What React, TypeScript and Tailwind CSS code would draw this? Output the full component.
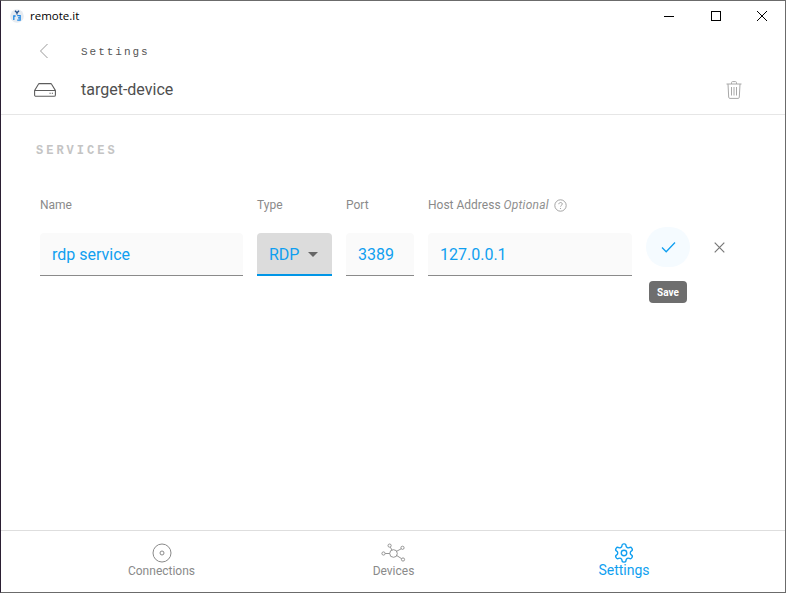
import React from "react";

function Field({ w, value }: { w: string; value: string }) {
  return (
    <div className={`${w} h-[43px] bg-[#fafafa] border-b border-[#8a8a8a] rounded-t flex items-center px-3 text-[16px] text-[#109ff0]`}>
      <span className="relative top-[1px]">{value}</span>
    </div>
  );
}

function NavItem({ label, active, children }: { label: string; active?: boolean; children: React.ReactNode }) {
  return (
    <div className={`flex-1 flex flex-col items-center ${active ? "text-[#109ff0]" : "text-[#8a8a8a]"}`}>
      <div className="h-[22px] flex items-center justify-center mt-[11px]">{children}</div>
      <span className={active ? "text-[14px] leading-[16px] mt-[-2px]" : "text-[12px] leading-[16px] mt-[-1px]"}>{label}</span>
    </div>
  );
}

export default function App() {
  return (
    <div
      className="w-[786px] h-[593px] bg-white flex flex-col overflow-hidden border border-[#6b6b6b] border-l-[#2b1f33]"
      style={{ fontFamily: "Roboto, sans-serif" }}
    >
      {/* Title bar */}
      <div className="h-[29px] flex items-center shrink-0">
        <svg className="ml-[9px] w-[14px] h-[14px]" viewBox="0 0 14 14">
          <circle cx="7" cy="7" r="6.8" fill="#e6ebf1" />
          <path d="M5 1.8l2 2 2-2M7 3.8v1.6" fill="none" stroke="#1d4f91" strokeWidth="1.3" />
          <path d="M3.8 11V7h1.8" fill="none" stroke="#1e88e5" strokeWidth="1.3" />
          <path d="M7.2 6.6h3v4.6h-3M8 8.9h2.2" fill="none" stroke="#1e88e5" strokeWidth="1.2" />
        </svg>
        <span className="ml-[6px] text-[11.5px] text-black" style={{ fontFamily: "'Open Sans', Roboto, sans-serif" }}>remote.it</span>
        <div className="ml-auto flex items-center">
          <svg className="w-[46px] h-[29px]" viewBox="0 0 46 29">
            <path d="M17 15.5h10" stroke="#000" strokeWidth="1" />
          </svg>
          <svg className="w-[46px] h-[29px]" viewBox="0 0 46 29">
            <rect x="18.5" y="10.5" width="9" height="9" fill="none" stroke="#000" strokeWidth="1" />
          </svg>
          <svg className="w-[46px] h-[29px]" viewBox="0 0 46 29">
            <path d="M18 10l10 10M28 10l-10 10" stroke="#000" strokeWidth="1" />
          </svg>
        </div>
      </div>

      {/* Settings header */}
      <div className="h-[43px] flex items-center shrink-0">
        <svg className="ml-[38px] w-[10px] h-[16px] relative -top-[1px]" viewBox="0 0 10 16">
          <path d="M8.5 1L1.5 8l7 7" fill="none" stroke="#9a9a9a" strokeWidth="1" />
        </svg>
        <span
          className="ml-[32px] text-[11px] tracking-[0.18em] text-[#555] font-medium relative top-[1px]"
          style={{ fontFamily: "'Liberation Mono', monospace" }}
        >
          Settings
        </span>
      </div>

      {/* Device row */}
      <div className="h-[42px] flex items-center shrink-0 border-b border-[#e6e6e6] pb-[8px]">
        <svg className="ml-[33px] w-[22px] h-[14px]" viewBox="0 0 22 14">
          <path
            d="M.6 7.5L4.4 1.2c.2-.4.5-.6 1-.6h11.2c.5 0 .8.2 1 .6l3.8 6.3v4.4c0 .8-.6 1.4-1.4 1.4H2c-.8 0-1.4-.6-1.4-1.4zM.6 7.5h20.8"
            fill="none"
            stroke="#5c5c5c"
            strokeWidth="1.1"
          />
          <path d="M15.5 10.2h1.2M17.8 10.2H19" stroke="#5c5c5c" strokeWidth="1.1" />
        </svg>
        <span className="ml-[25px] text-[16px] text-[#4f4f4f]">target-device</span>
        <svg className="ml-auto mr-[43px] w-[16px] h-[18px]" viewBox="0 0 16 18">
          <path
            d="M.5 3h15M5.5 3V1.6c0-.6.4-1 1-1h3c.6 0 1 .4 1 1V3M2 3l.7 13.2c0 .7.5 1.2 1.1 1.2h8.4c.6 0 1.1-.5 1.1-1.2L14 3M5.5 6v8.5M8 6v8.5M10.5 6v8.5"
            fill="none"
            stroke="#a8a8a8"
            strokeWidth="1"
          />
        </svg>
      </div>

      {/* Services */}
      <div className="flex-1 pl-[35px]">
        <div
          className="mt-[28px] text-[12px] leading-[16px] font-bold tracking-[0.25em] text-[#c4c4c4]"
          style={{ fontFamily: "'Liberation Mono', monospace" }}
        >
          SERVICES
        </div>

        <div className="mt-[38px] ml-[4px] flex text-[12px] leading-[16px] text-[#8a8a8a]">
          <div className="w-[217px]">Name</div>
          <div className="w-[89px]">Type</div>
          <div className="w-[82px]">Port</div>
          <div className="flex items-center">
            <span>Host Address&nbsp;</span>
            <i className="text-[#8f8f8f] tracking-[0.02em]">Optional</i>
            <svg className="ml-[5px] w-[13px] h-[13px]" viewBox="0 0 13 13">
              <circle cx="6.5" cy="6.5" r="5.7" fill="none" stroke="#9a9a9a" strokeWidth="0.9" />
              <path d="M4.8 5.2c0-2.2 3.5-2.2 3.5-.2 0 1.2-1.7 1.3-1.7 2.6" fill="none" stroke="#9a9a9a" strokeWidth="0.9" />
              <circle cx="6.5" cy="9.5" r="0.6" fill="#9a9a9a" />
            </svg>
          </div>
        </div>

        <div className="mt-[20px] ml-[4px] flex items-start">
          <Field w="w-[203px]" value="rdp service" />
          <div className="ml-[14px] w-[75px] h-[43px] bg-[#dcdcdc] border-b-2 border-[#0096e7] rounded-t flex items-center pl-3 text-[16px] text-[#109ff0]">
            <span className="relative top-[1px]">RDP</span>
            <svg className="ml-[9px] w-[10px] h-[5px] relative top-[1px]" viewBox="0 0 10 5">
              <path d="M0 0h10L5 5z" fill="#666" />
            </svg>
          </div>
          <div className="ml-[14px]"><Field w="w-[68px]" value="3389" /></div>
          <div className="ml-[14px]"><Field w="w-[204px]" value="127.0.0.1" /></div>
          <div className="ml-[14px] relative -top-[6px] w-[44px] h-[40px] rounded-full bg-[#f5fbff] flex items-center justify-center">
            <svg className="w-[15px] h-[12px]" viewBox="0 0 15 12">
              <path d="M1 6.5l4.2 4.2L14 1.5" fill="none" stroke="#109ff0" strokeWidth="1.3" />
            </svg>
            <div className="absolute top-[54px] left-[3px] w-[38px] h-[22px] rounded bg-[#6e6e6e] text-white text-[10px] font-bold flex items-center justify-center">
              Save
            </div>
          </div>
          <svg className="ml-[24px] mt-[9px] w-[11px] h-[11px]" viewBox="0 0 11 11">
            <path d="M.7.7l9.6 9.6M10.3.7L.7 10.3" stroke="#777" strokeWidth="1.2" />
          </svg>
        </div>
      </div>

      {/* Bottom nav */}
      <div className="h-[62px] shrink-0 border-t border-[#dedede] flex">
        <div className="w-[321px] flex"><NavItem label="Connections">
          <svg className="w-[20px] h-[20px]" viewBox="0 0 20 20">
            <circle cx="10" cy="10" r="9" fill="none" stroke="#8a8a8a" strokeWidth="1" />
            <circle cx="10" cy="10" r="2" fill="none" stroke="#8a8a8a" strokeWidth="1" />
          </svg>
        </NavItem></div>
        <div className="w-[143px] flex"><NavItem label="Devices">
          <svg className="w-[25px] h-[20px]" viewBox="0 0 25 20">
            <g fill="none" stroke="#8a8a8a" strokeWidth="0.9">
              <circle cx="12.5" cy="10.5" r="3.8" />
              <circle cx="8.6" cy="2.6" r="1.6" />
              <circle cx="21.5" cy="4.8" r="1.6" />
              <circle cx="22" cy="16.5" r="1.6" />
              <circle cx="2.5" cy="10.5" r="1.6" />
              <path d="M9.4 4.2l1.6 3M20.2 5.8l-4.8 2.6M20.6 15.7l-5.2-3.4M4.2 10.5h4.5" />
            </g>
          </svg>
        </NavItem></div>
        <div className="w-[318px] flex"><NavItem label="Settings" active>
          <svg className="w-[22px] h-[22px]" viewBox="0 0 24 24" fill="none" stroke="#109ff0" strokeWidth="1.5" strokeLinecap="round" strokeLinejoin="round">
            <path d="M12.22 2h-.44a2 2 0 0 0-2 2v.18a2 2 0 0 1-1 1.73l-.43.25a2 2 0 0 1-2 0l-.15-.08a2 2 0 0 0-2.73.73l-.22.38a2 2 0 0 0 .73 2.73l.15.1a2 2 0 0 1 1 1.72v.51a2 2 0 0 1-1 1.74l-.15.09a2 2 0 0 0-.73 2.73l.22.38a2 2 0 0 0 2.73.73l.15-.08a2 2 0 0 1 2 0l.43.25a2 2 0 0 1 1 1.73V20a2 2 0 0 0 2 2h.44a2 2 0 0 0 2-2v-.18a2 2 0 0 1 1-1.73l.43-.25a2 2 0 0 1 2 0l.15.08a2 2 0 0 0 2.73-.73l.22-.39a2 2 0 0 0-.73-2.73l-.15-.08a2 2 0 0 1-1-1.74v-.5a2 2 0 0 1 1-1.74l.15-.09a2 2 0 0 0 .73-2.73l-.22-.38a2 2 0 0 0-2.73-.73l-.15.08a2 2 0 0 1-2 0l-.43-.25a2 2 0 0 1-1-1.73V4a2 2 0 0 0-2-2z" />
            <circle cx="12" cy="12" r="3" />
          </svg>
        </NavItem></div>
      </div>
    </div>
  );
}
